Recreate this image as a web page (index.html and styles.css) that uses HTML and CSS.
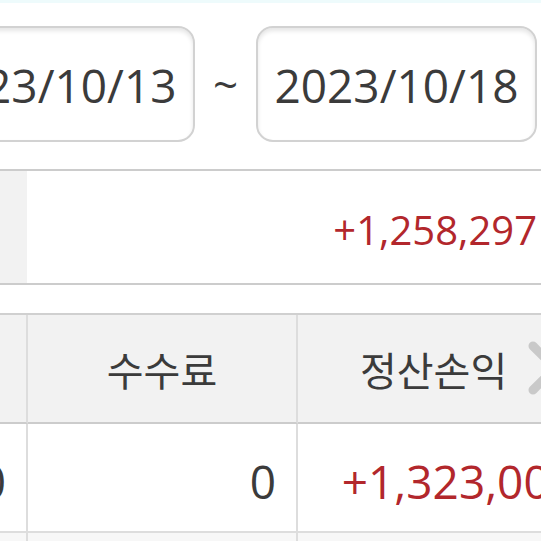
FILE: index.html
```html
<!DOCTYPE html>
<html lang="ko">
<head>
<meta charset="utf-8">
<link rel="stylesheet" href="styles.css">
</head>
<body>
<div class="page">
  <div class="topband"></div>
  <div class="dates">
    <div class="datebox">2023/10/13</div>
    <div class="tilde">~</div>
    <div class="datebox">2023/10/18</div>
  </div>
  <div class="summary">
    <div class="sum-label"></div>
    <div class="sum-value red">+1,258,297</div>
  </div>
  <div class="table">
    <div class="cell head c1"></div>
    <div class="cell head c2">수수료</div>
    <div class="cell head c3">정산손익
      <svg class="xicon" width="56" height="56" viewBox="0 0 56 56"><path d="M6 6 L50 50 M50 6 L6 50" stroke="#c9c9c9" stroke-width="9" stroke-linecap="round" fill="none"/></svg>
    </div>
    <div class="cell data c1">1,323,000</div>
    <div class="cell data c2">0</div>
    <div class="cell data c3 red">+1,323,000</div>
    <div class="cell next c1"></div>
    <div class="cell next c2"></div>
    <div class="cell next c3"></div>
  </div>
</div>
</body>
</html>
```
FILE: styles.css
```css
html, body {
  margin: 0;
  padding: 0;
  background: #ffffff;
}
.page {
  width: 541px;
  height: 541px;
  overflow: hidden;
  position: relative;
  font-family: "Open Sans", "Noto Sans CJK KR", sans-serif;
  color: #3b3b3b;
}
.topband {
  height: 3px;
  background: #eefbfc;
}
.dates {
  display: flex;
  align-items: center;
  margin-top: 23px;
  margin-left: -86px;
}
.datebox {
  flex: 0 0 auto;
  box-sizing: border-box;
  width: 281px;
  height: 116px;
  border: 2px solid #d2d2d2;
  border-radius: 17px;
  box-shadow: inset 0 3px 4px rgba(0, 0, 0, 0.10);
  display: flex;
  align-items: center;
  justify-content: center;
  font-size: 46px;
  padding-top: 2px;
}
.tilde {
  flex: 0 0 61px;
  text-align: center;
  font-size: 44px;
  line-height: 1;
}
.summary {
  margin-top: 27px;
  height: 112px;
  border-top: 2px solid #cccccc;
  border-bottom: 2px solid #cccccc;
  display: flex;
}
.sum-label {
  width: 27px;
  background: #f2f2f2;
}
.sum-value {
  flex: 1;
  display: flex;
  align-items: center;
  justify-content: flex-end;
  padding-right: 4px;
  font-size: 40px;
  padding-top: 4px;
}
.red {
  color: #b2272c;
}
.table {
  margin-top: 28px;
  margin-left: -150px;
  display: grid;
  grid-template-columns: 178px 270px 300px;
  grid-template-rows: 109px 109px 40px;
  border-top: 2px solid #d0d0d0;
}
.cell {
  box-sizing: border-box;
  border-right: 2px solid #dddddd;
  display: flex;
  align-items: center;
  position: relative;
}
.head {
  background: #f2f2f2;
  border-bottom: 2px solid #cccccc;
  font-family: "Noto Sans CJK KR", sans-serif;
  font-size: 40px;
  justify-content: center;
}
.head.c3 {
  justify-content: flex-start;
  padding-left: 62px;
}
.xicon {
  position: absolute;
  left: 229px;
  top: 25px;
}
.data {
  border-bottom: 2px solid #dddddd;
  justify-content: flex-end;
  padding-right: 20px;
  font-size: 46px;
  padding-top: 6px;
}
.next {
  background: #f7f7f7;
}
```
